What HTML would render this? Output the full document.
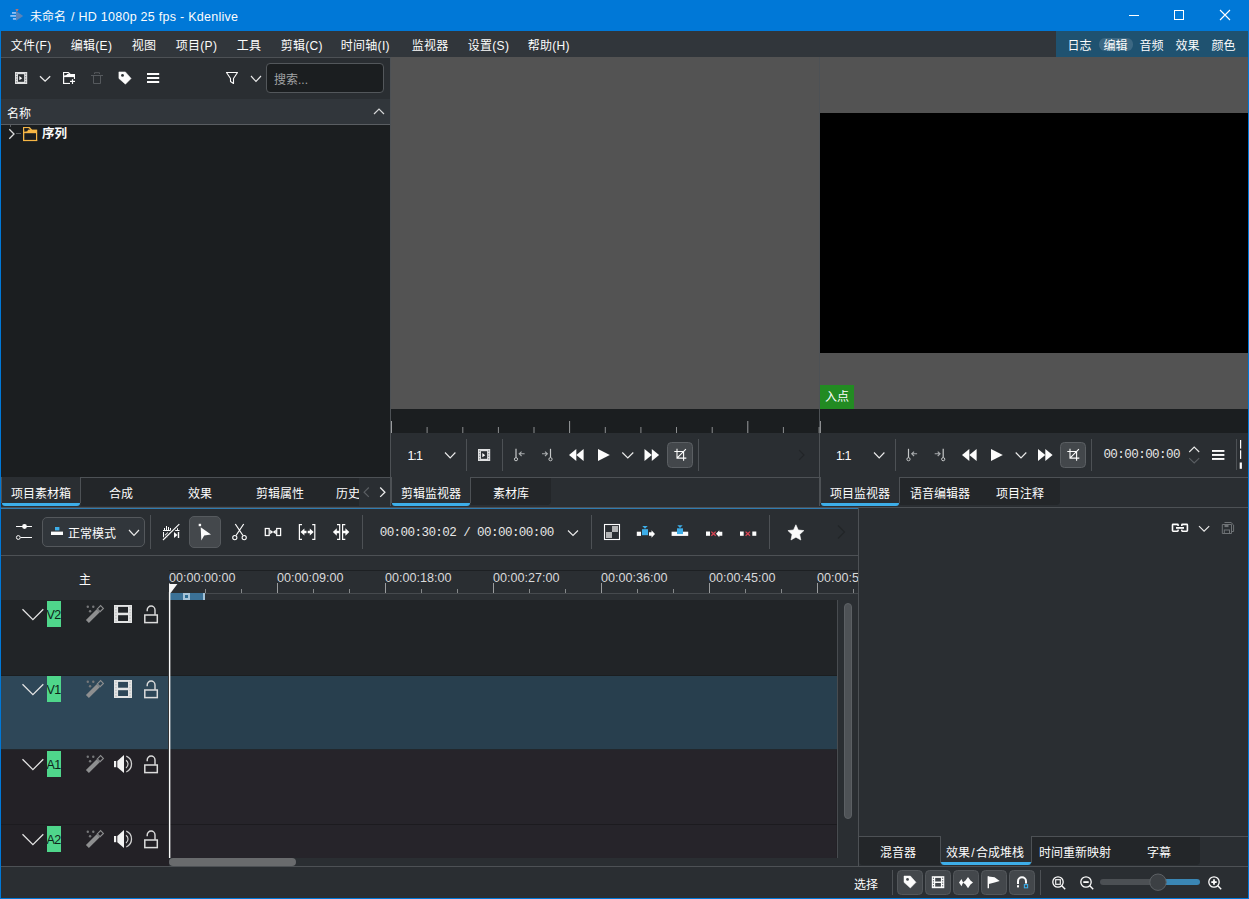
<!DOCTYPE html>
<html lang="zh-CN"><head><meta charset="utf-8"><title>Kdenlive</title>
<style>
*{box-sizing:border-box;margin:0;padding:0}
html,body{width:1249px;height:899px;overflow:hidden;background:#2a2e32}
body{position:relative;font-family:"Liberation Sans","Noto Sans CJK SC",sans-serif;font-size:12px;color:#fcfcfc}
.abs{position:absolute}
.t{position:absolute;white-space:nowrap;line-height:16px;font-size:12px}
.mono{font-family:"Liberation Mono",monospace}
svg{position:absolute;overflow:visible}
</style></head><body>
<div class="abs" style="left:0px;top:0px;width:1249px;height:31px;background:#0078d7;"></div>
<div class="abs" style="left:1px;top:31px;width:1247px;height:26px;background:#31363b;"></div>
<div class="abs" style="left:1px;top:57px;width:390px;height:1px;background:#4d5155;"></div>
<div class="abs" style="left:1056px;top:31px;width:193px;height:26px;background:#1f5270;"></div>
<div class="abs" style="left:1px;top:58px;width:389px;height:41px;background:#2a2e32;"></div>
<div class="abs" style="left:1px;top:99px;width:389px;height:25px;background:#31363b;"></div>
<div class="abs" style="left:1px;top:124px;width:389px;height:1px;background:#5a5e62;"></div>
<div class="abs" style="left:1px;top:125px;width:389px;height:352px;background:#1b1e20;"></div>
<div class="abs" style="left:390px;top:58px;width:1px;height:449px;background:#4d5155;"></div>
<div class="abs" style="left:1px;top:477px;width:389px;height:29px;background:#232629;"></div>
<div class="abs" style="left:1px;top:477px;width:80px;height:29px;background:#2a2e32;"></div>
<div class="abs" style="left:80px;top:477px;width:310px;height:1px;background:#4d5155;"></div>
<div class="abs" style="left:80px;top:477px;width:1px;height:26px;background:#4d5155;"></div>
<div class="abs" style="left:1px;top:477px;width:1px;height:26px;background:#4d5155;"></div>
<div class="abs" style="left:2px;top:503px;width:78px;height:3px;background:#3daee9;border-radius:0 0 3px 3px"></div>
<div class="abs" style="left:391px;top:57px;width:428px;height:352px;background:#535353;"></div>
<div class="abs" style="left:391px;top:409px;width:428px;height:24px;background:#1b1e20;"></div>
<div class="abs" style="left:391px;top:433px;width:428px;height:44px;background:#2a2e32;"></div>
<div class="abs" style="left:819px;top:57px;width:1px;height:450px;background:#4d5155;"></div>
<div class="abs" style="left:391px;top:477px;width:428px;height:29px;background:#2a2e32;"></div>
<div class="abs" style="left:471px;top:478px;width:80px;height:27px;background:#232629;border-radius:0 0 4px 0"></div>
<div class="abs" style="left:470px;top:477px;width:349px;height:1px;background:#4d5155;"></div>
<div class="abs" style="left:470px;top:477px;width:1px;height:26px;background:#4d5155;"></div>
<div class="abs" style="left:391px;top:477px;width:1px;height:26px;background:#4d5155;"></div>
<div class="abs" style="left:392px;top:503px;width:78px;height:3px;background:#3daee9;border-radius:0 0 3px 3px"></div>
<div class="abs" style="left:820px;top:57px;width:428px;height:352px;background:#535353;"></div>
<div class="abs" style="left:820px;top:113px;width:428px;height:240px;background:#000;"></div>
<div class="abs" style="left:820px;top:385px;width:34px;height:24px;background:#228b22;"></div>
<div class="abs" style="left:820px;top:409px;width:428px;height:24px;background:#1b1e20;"></div>
<div class="abs" style="left:820px;top:433px;width:428px;height:44px;background:#2a2e32;"></div>
<div class="abs" style="left:820px;top:477px;width:428px;height:29px;background:#2a2e32;"></div>
<div class="abs" style="left:900px;top:478px;width:160px;height:27px;background:#232629;border-radius:0 0 4px 0"></div>
<div class="abs" style="left:899px;top:477px;width:349px;height:1px;background:#4d5155;"></div>
<div class="abs" style="left:899px;top:477px;width:1px;height:26px;background:#4d5155;"></div>
<div class="abs" style="left:820px;top:477px;width:1px;height:26px;background:#4d5155;"></div>
<div class="abs" style="left:821px;top:503px;width:78px;height:3px;background:#3daee9;border-radius:0 0 3px 3px"></div>
<div class="abs" style="left:1px;top:506px;width:1247px;height:1px;background:#2a2e32;"></div>
<div class="abs" style="left:1px;top:507px;width:1247px;height:1px;background:#4d5155;"></div>
<div class="abs" style="left:1px;top:508px;width:858px;height:1px;background:#2f7bb0;"></div>
<div class="abs" style="left:1px;top:509px;width:857px;height:46px;background:#2a2e32;"></div>
<div class="abs" style="left:1px;top:555px;width:857px;height:1px;background:#4d5155;"></div>
<div class="abs" style="left:1px;top:556px;width:857px;height:310px;background:#2a2e32;"></div>
<div class="abs" style="left:858px;top:508px;width:1px;height:358px;background:#4d5155;"></div>
<div class="abs" style="left:859px;top:508px;width:389px;height:358px;background:#2a2e32;"></div>
<div class="abs" style="left:1px;top:866px;width:1247px;height:1px;background:#4d5155;"></div>
<div class="abs" style="left:1px;top:867px;width:1247px;height:31px;background:#2a2e32;"></div>
<div class="abs" style="left:0px;top:31px;width:1px;height:868px;background:#0078d7;"></div>
<div class="abs" style="left:1248px;top:31px;width:1px;height:868px;background:#0078d7;"></div>
<div class="abs" style="left:0px;top:898px;width:1249px;height:1px;background:#0078d7;"></div>
<div class="abs" style="left:169px;top:570px;width:689px;height:1px;background:#1d2023;"></div>
<div class="abs" style="left:169px;top:593px;width:689px;height:7px;background:#2c3034;"></div>
<div class="abs" style="left:169px;top:593px;width:689px;height:1px;background:#464a4e;"></div>
<div class="abs" style="left:1px;top:600px;width:836px;height:75px;background:#212427;"></div>
<div class="abs" style="left:1px;top:675px;width:837px;height:1px;background:#1b1e20;"></div>
<div class="abs" style="left:1px;top:676px;width:167px;height:73px;background:#2e4758;"></div>
<div class="abs" style="left:168px;top:676px;width:669px;height:73px;background:#283f4e;"></div>
<div class="abs" style="left:1px;top:749px;width:837px;height:1px;background:#22282d;"></div>
<div class="abs" style="left:1px;top:750px;width:836px;height:75px;background:#232126;"></div>
<div class="abs" style="left:168px;top:750px;width:668px;height:75px;background:#26242a;"></div>
<div class="abs" style="left:1px;top:825px;width:836px;height:33px;background:#232126;"></div>
<div class="abs" style="left:168px;top:825px;width:668px;height:33px;background:#26242a;"></div>
<div class="abs" style="left:1px;top:858px;width:168px;height:8px;background:#232126;"></div>
<div class="abs" style="left:1px;top:824px;width:836px;height:1px;background:#1c1b1f;"></div>
<div class="abs" style="left:168px;top:600px;width:1px;height:258px;background:#1b1e20;"></div>
<div class="abs" style="left:47px;top:601px;width:14px;height:26px;background:#4fd68b;"></div>
<div class="abs" style="left:47px;top:676px;width:14px;height:26px;background:#4fd68b;"></div>
<div class="abs" style="left:47px;top:751px;width:14px;height:26px;background:#4fd68b;"></div>
<div class="abs" style="left:47px;top:826px;width:14px;height:26px;background:#4fd68b;"></div>
<div class="abs" style="left:170px;top:593px;width:35px;height:7px;background:#3b7196;"></div>
<div class="abs" style="left:203px;top:593px;width:2px;height:7px;background:#a3c2d7;"></div>
<div class="abs" style="left:169px;top:858px;width:127px;height:8px;background:#696b6d;border-radius:4px"></div>
<div class="abs" style="left:844px;top:603px;width:8px;height:216px;background:#4e5256;border-radius:4px;border:1px solid #5c6064"></div>
<div class="abs" style="left:837px;top:600px;width:1px;height:258px;background:#484c50;"></div>
<div class="t " style="left:30px;top:8.5px;font-size:12.5px;letter-spacing:0.27px"><span style="font-size:12px;letter-spacing:0;margin-right:1.2px">未命名</span> / HD 1080p 25 fps - Kdenlive</div>
<div class="t " style="left:10.7px;top:38px;letter-spacing:0.3px">文件(F)</div>
<div class="t " style="left:70.7px;top:38px;letter-spacing:0.3px">编辑(E)</div>
<div class="t " style="left:131.7px;top:38px;letter-spacing:0.3px">视图</div>
<div class="t " style="left:175.7px;top:38px;letter-spacing:0.3px">项目(P)</div>
<div class="t " style="left:236.7px;top:38px;letter-spacing:0.3px">工具</div>
<div class="t " style="left:280.7px;top:38px;letter-spacing:0.3px">剪辑(C)</div>
<div class="t " style="left:340.7px;top:38px;letter-spacing:0.3px">时间轴(I)</div>
<div class="t " style="left:411.7px;top:38px;letter-spacing:0.3px">监视器</div>
<div class="t " style="left:467.7px;top:38px;letter-spacing:0.3px">设置(S)</div>
<div class="t " style="left:527.7px;top:38px;letter-spacing:0.3px">帮助(H)</div>
<div class="abs" style="left:1099px;top:38px;width:34px;height:13px;background:#3c6883;border-radius:6px"></div>
<div class="t " style="left:1067.4px;top:38px;">日志</div>
<div class="t " style="left:1103.4px;top:38px;">编辑</div>
<div class="t " style="left:1139.4px;top:38px;">音频</div>
<div class="t " style="left:1175.4px;top:38px;">效果</div>
<div class="t " style="left:1211.4px;top:38px;">颜色</div>
<div class="abs" style="left:266px;top:63px;width:118px;height:30px;background:#1b1e20;border:1px solid #53575b;border-radius:4px"></div>
<div class="t " style="left:274px;top:72px;color:#a1a3a5">搜索...</div>
<div class="t " style="left:7px;top:106px;">名称</div>
<div class="t " style="left:42px;top:126px;font-weight:bold;font-size:12.5px">序列</div>
<div class="t " style="left:11px;top:486px;">项目素材箱</div>
<div class="t " style="left:109px;top:486px;">合成</div>
<div class="t " style="left:188px;top:486px;">效果</div>
<div class="t " style="left:256px;top:486px;">剪辑属性</div>
<div class="t " style="left:336px;top:486px;">历史</div>
<div class="t " style="left:401px;top:486px;">剪辑监视器</div>
<div class="t " style="left:493px;top:486px;">素材库</div>
<div class="t " style="left:407.5px;top:448px;font-size:12.5px">1<span style="margin:0 -0.9px 0 -1.1px">:</span>1</div>
<div class="t " style="left:825px;top:389px;">入点</div>
<div class="t " style="left:836px;top:448px;font-size:12.5px">1<span style="margin:0 -0.9px 0 -1.1px">:</span>1</div>
<div class="t " style="left:830px;top:486px;">项目监视器</div>
<div class="t " style="left:910px;top:486px;">语音编辑器</div>
<div class="t " style="left:996px;top:486px;">项目注释</div>
<div class="t mono" style="left:1103.4px;top:447px;font-size:12.6px;letter-spacing:-0.6px;color:#e6e6e6">00:00:00:00</div>
<div class="abs" style="left:42px;top:517px;width:103px;height:30px;background:#31363b;border:1px solid #54585c;border-radius:5px"></div>
<div class="t " style="left:68px;top:526px;">正常模式</div>
<div class="t mono" style="left:379.7px;top:525px;font-size:12.6px;letter-spacing:-0.6px;color:#e6e6e6">00:00:30:02 / 00:00:00:00</div>
<div class="t " style="left:79px;top:572px;">主</div>
<div class="abs" style="left:169px;top:560px;width:689px;height:34px;overflow:hidden">
<div class="t " style="left:0px;top:10px;font-size:12.6px;color:#d9dadb">00:00:00:00</div>
<div class="t " style="left:108px;top:10px;font-size:12.6px;color:#d9dadb">00:00:09:00</div>
<div class="t " style="left:216px;top:10px;font-size:12.6px;color:#d9dadb">00:00:18:00</div>
<div class="t " style="left:324px;top:10px;font-size:12.6px;color:#d9dadb">00:00:27:00</div>
<div class="t " style="left:432px;top:10px;font-size:12.6px;color:#d9dadb">00:00:36:00</div>
<div class="t " style="left:540px;top:10px;font-size:12.6px;color:#d9dadb">00:00:45:00</div>
<div class="t " style="left:648px;top:10px;font-size:12.6px;color:#d9dadb">00:00:54:00</div>
</div>
<div class="abs" style="left:859px;top:837px;width:341px;height:28px;background:#232629;border-radius:0 0 4px 4px"></div>
<div class="abs" style="left:940px;top:836px;width:91px;height:30px;background:#2a2e32;"></div>
<div class="abs" style="left:859px;top:836px;width:81px;height:1px;background:#4d5155;"></div>
<div class="abs" style="left:1031px;top:836px;width:217px;height:1px;background:#4d5155;"></div>
<div class="abs" style="left:940px;top:836px;width:1px;height:27px;background:#4d5155;"></div>
<div class="abs" style="left:1031px;top:836px;width:1px;height:27px;background:#4d5155;"></div>
<div class="abs" style="left:941px;top:862px;width:90px;height:3px;background:#3daee9;border-radius:0 0 3px 3px"></div>
<div class="t " style="left:880px;top:845px;">混音器</div>
<div class="t " style="left:946px;top:845px;">效果<span style="margin:0 1.3px">/</span>合成堆栈</div>
<div class="t " style="left:1039px;top:845px;">时间重新映射</div>
<div class="t " style="left:1147px;top:845px;">字幕</div>
<div class="t " style="left:854px;top:877px;">选择</div>
<div class="abs" style="left:47px;top:601px;width:14px;height:26px;overflow:hidden"><div class="t" style="left:-0.6px;top:5.8px;font-size:12.5px;color:#0e241a;letter-spacing:-0.5px">V2</div></div>
<div class="abs" style="left:47px;top:676px;width:14px;height:26px;overflow:hidden"><div class="t" style="left:-0.6px;top:5.8px;font-size:12.5px;color:#0e241a;letter-spacing:-0.5px">V1</div></div>
<div class="abs" style="left:47px;top:751px;width:14px;height:26px;overflow:hidden"><div class="t" style="left:-0.6px;top:5.8px;font-size:12.5px;color:#0e241a;letter-spacing:-0.5px">A1</div></div>
<div class="abs" style="left:47px;top:826px;width:14px;height:26px;overflow:hidden"><div class="t" style="left:-0.6px;top:5.8px;font-size:12.5px;color:#0e241a;letter-spacing:-0.5px">A2</div></div>
<svg style="left:0;top:0" width="1249" height="899" viewBox="0 0 1249 899"><polygon points="16,11 23.2,15.9 16,20.8" fill="#5a83b8"/><rect x="12" y="12" width="4" height="1.8" fill="#8fbdf2"/><rect x="10.3" y="15" width="5.7" height="1.8" fill="#8fbdf2"/><rect x="12.9" y="18" width="3.1" height="1.8" fill="#8fbdf2"/><polygon points="15.4,9.2 18.6,9.2 17,11.6" fill="#f3724f"/><rect x="1129" y="15" width="10" height="1" fill="#fff"/><rect x="1174.5" y="10.5" width="9" height="9" fill="none" stroke="#fff" stroke-width="1"/><path d="M1220,10 L1230,20 M1230,10 L1220,20" stroke="#fff" stroke-width="1.1" fill="none"/><rect x="15" y="72" width="12.2" height="12" fill="#dfe0e1"/><rect x="18" y="74.2" width="6.1" height="7.6" fill="#2a2e32"/><rect x="16" y="73.4" width="1.2" height="1.3" fill="#8e9194"/><rect x="25" y="73.4" width="1.2" height="1.3" fill="#8e9194"/><rect x="16" y="76.0" width="1.2" height="1.3" fill="#8e9194"/><rect x="25" y="76.0" width="1.2" height="1.3" fill="#8e9194"/><rect x="16" y="78.60000000000001" width="1.2" height="1.3" fill="#8e9194"/><rect x="25" y="78.60000000000001" width="1.2" height="1.3" fill="#8e9194"/><rect x="16" y="81.2" width="1.2" height="1.3" fill="#8e9194"/><rect x="25" y="81.2" width="1.2" height="1.3" fill="#8e9194"/><polygon points="19.3,76.1 19.3,80.3 22.2,78.2" fill="#fcfcfc"/><polyline points="40,76.2 45.1,81.2 50.2,76.2" fill="none" stroke="#ebebeb" stroke-width="1.3"/><rect x="63" y="72" width="1.2" height="12" fill="#fcfcfc"/><rect x="63" y="72" width="5.6" height="1.2" fill="#fcfcfc"/><path d="M68.2,72.4 L70.4,74.6" stroke="#fcfcfc" stroke-width="1.3"/><rect x="64" y="74" width="11" height="3.1" fill="#fcfcfc"/><polygon points="64.2,73.2 67.8,73.2 66.4,75 64.2,75.6" fill="#2a2e32"/><rect x="73.9" y="77" width="1.1" height="2" fill="#fcfcfc"/><rect x="63" y="82.9" width="7" height="1.1" fill="#fcfcfc"/><rect x="70" y="80.8" width="5" height="1.2" fill="#fcfcfc"/><rect x="71.9" y="79.2" width="1.2" height="4.8" fill="#fcfcfc"/><path d="M91,75.5 H103 M94.5,74 V72.7 H99.5 V74 M93.5,76 V83.5 H100.5 V76" fill="none" stroke="#55595d" stroke-width="1"/><g transform="translate(118.9,71.9) scale(1.0)"><polygon points="0,0 6.5,0 12.2,6.5 6.5,12.3 0,6.5" fill="#fcfcfc" stroke="#fcfcfc" stroke-width="0.5" stroke-linejoin="round"/><circle cx="3.6" cy="3.5" r="1.4" fill="#2a2e32"/></g><rect x="147" y="73" width="12.2" height="2" fill="#fcfcfc"/><rect x="147" y="77" width="12.2" height="2" fill="#fcfcfc"/><rect x="147" y="81" width="12.2" height="2" fill="#fcfcfc"/><path d="M226.5,72.5 H237.5 L233.5,78.5 V83.5 L230.5,81.5 V78.5 Z" fill="none" stroke="#fcfcfc" stroke-width="1.1" stroke-linejoin="round"/><polyline points="251,76 256.0,81.5 261,76" fill="none" stroke="#ebebeb" stroke-width="1.15"/><polyline points="374,114 379,109 384,114" fill="none" stroke="#d5d6d7" stroke-width="1.2"/><polyline points="9.3,129.2 14,134 9.3,138.8" fill="none" stroke="#dcdcdc" stroke-width="1.3"/><path d="M16,133.5 H21" stroke="#5b5f63" stroke-width="1"/><path d="M10.5,125 V127" stroke="#5b5f63" stroke-width="1"/><rect x="23" y="127" width="1.3" height="14" fill="#f6b645"/><rect x="23" y="127" width="6.6" height="1.3" fill="#f6b645"/><path d="M29.2,127.5 L31.6,130.2" stroke="#f6b645" stroke-width="1.4"/><rect x="24" y="129.6" width="13.2" height="3.6" fill="#f6b645"/><polygon points="24.3,128.3 28.7,128.3 27.3,131.3 24.3,131.8" fill="#1b1e20"/><rect x="36" y="133" width="1.2" height="8" fill="#f6b645"/><rect x="23" y="139.9" width="14.2" height="1.2" fill="#f6b645"/><rect x="359" y="478" width="31" height="28" fill="#2a2e32"/><polyline points="368.8,487.5 364.1,492.2 368.8,496.9" fill="none" stroke="#5b5f63" stroke-width="1.2"/><polyline points="380.2,487.5 384.9,492.2 380.2,496.9" fill="none" stroke="#ececec" stroke-width="1.3"/><rect x="391.0" y="421" width="1" height="12" fill="#9a9c9e"/><rect x="426.6" y="427" width="1" height="6" fill="#8b8d8f"/><rect x="462.3" y="427" width="1" height="6" fill="#8b8d8f"/><rect x="497.9" y="427" width="1" height="6" fill="#8b8d8f"/><rect x="533.5" y="427" width="1" height="6" fill="#8b8d8f"/><rect x="569.1" y="421" width="1" height="12" fill="#9a9c9e"/><rect x="604.8" y="427" width="1" height="6" fill="#8b8d8f"/><rect x="640.4" y="427" width="1" height="6" fill="#8b8d8f"/><rect x="676.0" y="427" width="1" height="6" fill="#8b8d8f"/><rect x="711.7" y="427" width="1" height="6" fill="#8b8d8f"/><rect x="747.3" y="421" width="1" height="12" fill="#9a9c9e"/><rect x="782.9" y="427" width="1" height="6" fill="#8b8d8f"/><rect x="818.6" y="427" width="1" height="6" fill="#8b8d8f"/><rect x="820" y="421" width="1" height="12" fill="#8b8d8f"/><polyline points="445,452.5 450.2,458 455.4,452.5" fill="none" stroke="#ebebeb" stroke-width="1.15"/><rect x="466" y="439" width="1" height="32" fill="#4d5155"/><rect x="478" y="449" width="12.2" height="12" fill="#dfe0e1"/><rect x="481" y="451.2" width="6.1" height="7.6" fill="#2a2e32"/><rect x="479" y="450.4" width="1.2" height="1.3" fill="#8e9194"/><rect x="488" y="450.4" width="1.2" height="1.3" fill="#8e9194"/><rect x="479" y="453.0" width="1.2" height="1.3" fill="#8e9194"/><rect x="488" y="453.0" width="1.2" height="1.3" fill="#8e9194"/><rect x="479" y="455.59999999999997" width="1.2" height="1.3" fill="#8e9194"/><rect x="488" y="455.59999999999997" width="1.2" height="1.3" fill="#8e9194"/><rect x="479" y="458.2" width="1.2" height="1.3" fill="#8e9194"/><rect x="488" y="458.2" width="1.2" height="1.3" fill="#8e9194"/><polygon points="482.3,453.1 482.3,457.3 485.2,455.2" fill="#fcfcfc"/><rect x="502" y="439" width="1" height="32" fill="#4d5155"/><path d="M516,448.8 V457.6" stroke="#c6c8c9" stroke-width="1.2"/><circle cx="516" cy="459.2" r="1.6" fill="none" stroke="#c6c8c9" stroke-width="1"/><path d="M524.6,453.8 H519.2 M521.6,451.6 L519.2,453.8 L521.6,456" fill="none" stroke="#a9acae" stroke-width="1.1"/><path d="M550.5,448.8 V457.6" stroke="#c6c8c9" stroke-width="1.2"/><circle cx="550.5" cy="459.2" r="1.6" fill="none" stroke="#c6c8c9" stroke-width="1"/><path d="M542,453.8 H547.4 M545,451.6 L547.4,453.8 L545,456" fill="none" stroke="#a9acae" stroke-width="1.1"/><polygon points="576.3,449 576.3,461 569,455" fill="#fcfcfc"/><polygon points="583.6,449 583.6,461 576.3,455" fill="#fcfcfc"/><polygon points="598,449 598,461 609.8,455" fill="#fcfcfc"/><polyline points="622.3,452.5 627.8,458 633.3,452.5" fill="none" stroke="#ebebeb" stroke-width="1.15"/><polygon points="644.5,449 644.5,461 651.8,455" fill="#fcfcfc"/><polygon points="651.8,449 651.8,461 659.1,455" fill="#fcfcfc"/><rect x="667.5" y="442.5" width="25" height="25" rx="4" fill="#43474b" stroke="#5b5f63" stroke-width="1"/><path d="M677.0,448.8 V458.1 H686.3 M674.3,451.5 H683.5999999999999 V460.8 M677.0,458.1 L685.9,449.2" fill="none" stroke="#fcfcfc" stroke-width="1.1"/><rect x="698" y="439" width="1" height="32" fill="#4d5155"/><polyline points="799.2,450.2 804,455 799.2,459.8" fill="none" stroke="#222528" stroke-width="1.2"/><polyline points="874,452.5 879.2,458 884.4,452.5" fill="none" stroke="#ebebeb" stroke-width="1.15"/><rect x="895" y="439" width="1" height="32" fill="#4d5155"/><path d="M908.5,448.8 V457.6" stroke="#c6c8c9" stroke-width="1.2"/><circle cx="908.5" cy="459.2" r="1.6" fill="none" stroke="#c6c8c9" stroke-width="1"/><path d="M917.1,453.8 H911.7 M914.1,451.6 L911.7,453.8 L914.1,456" fill="none" stroke="#a9acae" stroke-width="1.1"/><path d="M943.2,448.8 V457.6" stroke="#c6c8c9" stroke-width="1.2"/><circle cx="943.2" cy="459.2" r="1.6" fill="none" stroke="#c6c8c9" stroke-width="1"/><path d="M934.7,453.8 H940.1 M937.7,451.6 L940.1,453.8 L937.7,456" fill="none" stroke="#a9acae" stroke-width="1.1"/><polygon points="969.3,449 969.3,461 962,455" fill="#fcfcfc"/><polygon points="976.6,449 976.6,461 969.3,455" fill="#fcfcfc"/><polygon points="991,449 991,461 1002.8,455" fill="#fcfcfc"/><polyline points="1015.7,452.5 1021.0,458 1026.3,452.5" fill="none" stroke="#ebebeb" stroke-width="1.15"/><polygon points="1038,449 1038,461 1045.3,455" fill="#fcfcfc"/><polygon points="1045.3,449 1045.3,461 1052.6,455" fill="#fcfcfc"/><rect x="1060.5" y="442.5" width="25" height="25" rx="4" fill="#43474b" stroke="#5b5f63" stroke-width="1"/><path d="M1070.0,448.8 V458.1 H1079.3 M1067.3,451.5 H1076.6 V460.8 M1070.0,458.1 L1078.8999999999999,449.2" fill="none" stroke="#fcfcfc" stroke-width="1.1"/><rect x="1091" y="439" width="1" height="32" fill="#4d5155"/><polyline points="1189.2,452 1194.2,447 1199.2,452" fill="none" stroke="#e8e8e8" stroke-width="1.1"/><polyline points="1189.2,458.2 1194.2,463 1199.2,458.2" fill="none" stroke="#5b5f63" stroke-width="1.1"/><rect x="1212" y="450" width="12.4" height="1.9" fill="#fcfcfc"/><rect x="1212" y="454" width="12.4" height="1.9" fill="#fcfcfc"/><rect x="1212" y="458" width="12.4" height="1.9" fill="#fcfcfc"/><rect x="1236" y="439" width="1" height="31" fill="#4d5155"/><rect x="1240" y="440" width="1.2" height="8.6" fill="#fcfcfc"/><rect x="1240" y="450.3" width="1.2" height="8.6" fill="#fcfcfc"/><rect x="1239.7" y="462.5" width="2.2" height="6.3" fill="#fcfcfc"/><path d="M16,526.5 H32 M20.5,537.5 H32" stroke="#fcfcfc" stroke-width="1"/><circle cx="24.5" cy="526.5" r="2.4" fill="#fcfcfc"/><circle cx="18.3" cy="537.5" r="1.9" fill="none" stroke="#fcfcfc" stroke-width="1"/><rect x="51" y="531.6" width="12" height="3.4" fill="#fcfcfc"/><rect x="55" y="527" width="4.4" height="3.4" fill="#3daee9"/><polyline points="129,530 134.0,535.4 139,530" fill="none" stroke="#ebebeb" stroke-width="1.15"/><rect x="150" y="515" width="1" height="34" fill="#4d5155"/><path d="M163,530.5 H179.5" stroke="#fcfcfc" stroke-width="1"/><rect x="164.0" y="528" width="1" height="2" fill="#fcfcfc"/><rect x="166.0" y="526" width="1" height="4" fill="#fcfcfc"/><rect x="168.0" y="527" width="1" height="3" fill="#fcfcfc"/><rect x="170.0" y="528" width="1" height="2" fill="#fcfcfc"/><rect x="173.0" y="528" width="1" height="2" fill="#fcfcfc"/><rect x="175.0" y="527" width="1" height="3" fill="#fcfcfc"/><rect x="177.0" y="526" width="1" height="4" fill="#fcfcfc"/><path d="M163.5,532 V538" stroke="#fcfcfc" stroke-width="1"/><polygon points="168,532 168,538 164.5,535" fill="#fcfcfc"/><path d="M178.5,532 V538" stroke="#fcfcfc" stroke-width="1.4"/><polygon points="174,532 174,538 177.5,535" fill="#fcfcfc"/><path d="M163.6,539.4 L178.7,524.8" stroke="#2a2e32" stroke-width="3.2"/><path d="M163,540 L179.3,524.2" stroke="#fcfcfc" stroke-width="1.1"/><rect x="189.5" y="516.5" width="31" height="31" rx="4.5" fill="#44484c" stroke="#565a5e" stroke-width="1"/><rect x="198.7" y="523.8" width="2.4" height="2.4" fill="#fcfcfc"/><polygon points="200.7,527.2 211,534.5 204.2,535.6 201.3,540.5" fill="#fcfcfc"/><path d="M235.3,524 L243,535.5 M243.7,524 L236,535.5" stroke="#fcfcfc" stroke-width="1.2" fill="none"/><circle cx="234.8" cy="537.6" r="2.1" fill="none" stroke="#fcfcfc" stroke-width="1.1"/><circle cx="244.2" cy="537.6" r="2.1" fill="none" stroke="#fcfcfc" stroke-width="1.1"/><rect x="265.3" y="528.5" width="3.9" height="7" fill="none" stroke="#fcfcfc" stroke-width="1.25"/><rect x="276.7" y="528.5" width="3.9" height="7" fill="none" stroke="#fcfcfc" stroke-width="1.25"/><polygon points="270.2,529.7 273.2,532 270.2,534.3" fill="#fcfcfc"/><polygon points="275.8,529.7 272.8,532 275.8,534.3" fill="#fcfcfc"/><path d="M302,524.6 H299.4 V539.4 H302 M312.2,524.6 H314.8 V539.4 H312.2" fill="none" stroke="#fcfcfc" stroke-width="1.2"/><polygon points="300.5,532 304.4,528.4 304.4,530.8 306.5,530.8 306.5,533.2 304.4,533.2 304.4,535.6" fill="#fcfcfc"/><polygon points="313.7,532 309.8,528.4 309.8,530.8 307.7,530.8 307.7,533.2 309.8,533.2 309.8,535.6" fill="#fcfcfc"/><path d="M337,524.6 H339.7 V539.4 H337 M345.3,524.6 H342.6 V539.4 H345.3" fill="none" stroke="#fcfcfc" stroke-width="1.2"/><polygon points="332.9,532 336.8,528.2 336.8,530.8 339.5,530.8 339.5,533.2 336.8,533.2 336.8,535.8" fill="#fcfcfc"/><polygon points="349.3,532 345.4,528.2 345.4,530.8 342.8,530.8 342.8,533.2 345.4,533.2 345.4,535.8" fill="#fcfcfc"/><rect x="362" y="515" width="1" height="34" fill="#4d5155"/><polyline points="568,530.5 573.0,535.5 578,530.5" fill="none" stroke="#ebebeb" stroke-width="1.15"/><rect x="591" y="515" width="1" height="34" fill="#4d5155"/><rect x="604.5" y="524.5" width="15" height="15" fill="none" stroke="#fcfcfc" stroke-width="1.1"/><rect x="612" y="526" width="6" height="6" fill="#b3b4b5"/><rect x="606" y="532" width="6" height="6" fill="#b3b4b5"/><rect x="636.8" y="531.7" width="4.2" height="4.2" fill="#fcfcfc"/><rect x="642" y="529.2" width="6" height="6" fill="#3daee9"/><polygon points="642.3,526 647.7,526 645,528.7" fill="#3daee9"/><polygon points="649,532.2 651.5,532.2 651.5,530.2 655,534 651.5,537.8 651.5,535.8 649,535.8" fill="#fcfcfc"/><rect x="671.6" y="531.7" width="16.6" height="4.2" fill="#fcfcfc"/><rect x="677" y="528.3" width="6" height="5.8" fill="#3daee9"/><polygon points="677.3,525.3 682.7,525.3 680,528" fill="#3daee9"/><rect x="706" y="531.5" width="4" height="4.3" fill="#fcfcfc"/><path d="M711.3,531.6 L715.7,535.8 M715.7,531.6 L711.3,535.8" stroke="#da4453" stroke-width="1.3"/><polygon points="716,533.7 719.3,530.2 719.3,531.7 722.3,531.7 722.3,535.7 719.3,535.7 719.3,537.2" fill="#fcfcfc"/><rect x="740" y="531.5" width="3.7" height="4.3" fill="#fcfcfc"/><path d="M745.6,531.6 L750,535.8 M750,531.6 L745.6,535.8" stroke="#da4453" stroke-width="1.3"/><rect x="752.3" y="531.5" width="4" height="4.3" fill="#fcfcfc"/><rect x="769" y="515" width="1" height="34" fill="#4d5155"/><polygon points="795.90,524.80 798.25,529.96 803.89,530.60 799.70,534.44 800.84,540.00 795.90,537.20 790.96,540.00 792.10,534.44 787.91,530.60 793.55,529.96" fill="#fcfcfc" stroke="#fcfcfc" stroke-width="0.6" stroke-linejoin="round"/><polyline points="838,525.5 844.5,532 838,538.5" fill="none" stroke="#222528" stroke-width="1.2"/><rect x="169.0" y="583" width="1" height="10" fill="#9a9c9e"/><rect x="205.0" y="589" width="1" height="4" fill="#85888a"/><rect x="241.0" y="589" width="1" height="4" fill="#85888a"/><rect x="277.0" y="583" width="1" height="10" fill="#9a9c9e"/><rect x="313.0" y="589" width="1" height="4" fill="#85888a"/><rect x="349.0" y="589" width="1" height="4" fill="#85888a"/><rect x="385.0" y="583" width="1" height="10" fill="#9a9c9e"/><rect x="421.0" y="589" width="1" height="4" fill="#85888a"/><rect x="457.0" y="589" width="1" height="4" fill="#85888a"/><rect x="493.0" y="583" width="1" height="10" fill="#9a9c9e"/><rect x="529.0" y="589" width="1" height="4" fill="#85888a"/><rect x="565.0" y="589" width="1" height="4" fill="#85888a"/><rect x="601.0" y="583" width="1" height="10" fill="#9a9c9e"/><rect x="637.0" y="589" width="1" height="4" fill="#85888a"/><rect x="673.0" y="589" width="1" height="4" fill="#85888a"/><rect x="709.0" y="583" width="1" height="10" fill="#9a9c9e"/><rect x="745.0" y="589" width="1" height="4" fill="#85888a"/><rect x="781.0" y="589" width="1" height="4" fill="#85888a"/><rect x="817.0" y="583" width="1" height="10" fill="#9a9c9e"/><rect x="853.0" y="589" width="1" height="4" fill="#85888a"/><polygon points="169,584 177.4,584 170.8,592.8 169,592.8" fill="#f6f6f6"/><rect x="168.9" y="592" width="1.45" height="266" fill="#f8f8f8"/><rect x="183" y="593" width="7" height="7" fill="#a6c3d7"/><rect x="185" y="595" width="3" height="3" fill="#2e6c93"/><polyline points="22.5,609.2 32.9,619.6 43.3,609.2" fill="none" stroke="#e4e4e4" stroke-width="1.3"/><path d="M87.4,621.6 L98.2,610.8000000000001" stroke="#8e8f90" stroke-width="4.2"/><path d="M97.3,608.9000000000001 L100.1,611.7 L103.4,608.4000000000001 L100.6,605.6 Z" fill="none" stroke="#8e8f90" stroke-width="1.1"/><circle cx="87.8" cy="606.8000000000001" r="1.2" fill="#77787a"/><circle cx="93.3" cy="606.8000000000001" r="1.2" fill="#77787a"/><circle cx="90.1" cy="611.2" r="1.2" fill="#77787a"/><g transform="translate(114,605) scale(1.0)"><rect x="0" y="0" width="18" height="18" fill="#e3e4e4"/><rect x="4.1" y="1.9" width="9.9" height="5.8" fill="#212427"/><rect x="4.1" y="10.2" width="9.9" height="5.8" fill="#212427"/><rect x="1.2" y="1.3" width="1.5" height="1.4" fill="#c4c5c5"/><rect x="15.3" y="1.3" width="1.5" height="1.4" fill="#c4c5c5"/><rect x="1.2" y="4.1" width="1.5" height="1.4" fill="#c4c5c5"/><rect x="15.3" y="4.1" width="1.5" height="1.4" fill="#c4c5c5"/><rect x="1.2" y="6.8999999999999995" width="1.5" height="1.4" fill="#c4c5c5"/><rect x="15.3" y="6.8999999999999995" width="1.5" height="1.4" fill="#c4c5c5"/><rect x="1.2" y="9.7" width="1.5" height="1.4" fill="#c4c5c5"/><rect x="15.3" y="9.7" width="1.5" height="1.4" fill="#c4c5c5"/><rect x="1.2" y="12.5" width="1.5" height="1.4" fill="#c4c5c5"/><rect x="15.3" y="12.5" width="1.5" height="1.4" fill="#c4c5c5"/><rect x="1.2" y="15.3" width="1.5" height="1.4" fill="#c4c5c5"/><rect x="15.3" y="15.3" width="1.5" height="1.4" fill="#c4c5c5"/></g><rect x="144.8" y="615.0" width="12.5" height="7.6" fill="none" stroke="#dcdcdc" stroke-width="1.5"/><path d="M147.2,611.3 V609.9 A3.9,3.9 0 0 1 155,609.9 V614.8" fill="none" stroke="#dcdcdc" stroke-width="1.4"/><polyline points="22.5,684.2 32.9,694.6 43.3,684.2" fill="none" stroke="#e4e4e4" stroke-width="1.3"/><path d="M87.4,696.6 L98.2,685.8000000000001" stroke="#8e8f90" stroke-width="4.2"/><path d="M97.3,683.9000000000001 L100.1,686.7 L103.4,683.4000000000001 L100.6,680.6 Z" fill="none" stroke="#8e8f90" stroke-width="1.1"/><circle cx="87.8" cy="681.8000000000001" r="1.2" fill="#77787a"/><circle cx="93.3" cy="681.8000000000001" r="1.2" fill="#77787a"/><circle cx="90.1" cy="686.2" r="1.2" fill="#77787a"/><g transform="translate(114,680) scale(1.0)"><rect x="0" y="0" width="18" height="18" fill="#e3e4e4"/><rect x="4.1" y="1.9" width="9.9" height="5.8" fill="#2e4758"/><rect x="4.1" y="10.2" width="9.9" height="5.8" fill="#2e4758"/><rect x="1.2" y="1.3" width="1.5" height="1.4" fill="#c4c5c5"/><rect x="15.3" y="1.3" width="1.5" height="1.4" fill="#c4c5c5"/><rect x="1.2" y="4.1" width="1.5" height="1.4" fill="#c4c5c5"/><rect x="15.3" y="4.1" width="1.5" height="1.4" fill="#c4c5c5"/><rect x="1.2" y="6.8999999999999995" width="1.5" height="1.4" fill="#c4c5c5"/><rect x="15.3" y="6.8999999999999995" width="1.5" height="1.4" fill="#c4c5c5"/><rect x="1.2" y="9.7" width="1.5" height="1.4" fill="#c4c5c5"/><rect x="15.3" y="9.7" width="1.5" height="1.4" fill="#c4c5c5"/><rect x="1.2" y="12.5" width="1.5" height="1.4" fill="#c4c5c5"/><rect x="15.3" y="12.5" width="1.5" height="1.4" fill="#c4c5c5"/><rect x="1.2" y="15.3" width="1.5" height="1.4" fill="#c4c5c5"/><rect x="15.3" y="15.3" width="1.5" height="1.4" fill="#c4c5c5"/></g><rect x="144.8" y="690.0" width="12.5" height="7.6" fill="none" stroke="#dcdcdc" stroke-width="1.5"/><path d="M147.2,686.3 V684.9 A3.9,3.9 0 0 1 155,684.9 V689.8" fill="none" stroke="#dcdcdc" stroke-width="1.4"/><polyline points="22.5,759.2 32.9,769.6 43.3,759.2" fill="none" stroke="#e4e4e4" stroke-width="1.3"/><path d="M87.4,771.6 L98.2,760.8000000000001" stroke="#8e8f90" stroke-width="4.2"/><path d="M97.3,758.9000000000001 L100.1,761.7 L103.4,758.4000000000001 L100.6,755.6 Z" fill="none" stroke="#8e8f90" stroke-width="1.1"/><circle cx="87.8" cy="756.8000000000001" r="1.2" fill="#77787a"/><circle cx="93.3" cy="756.8000000000001" r="1.2" fill="#77787a"/><circle cx="90.1" cy="761.2" r="1.2" fill="#77787a"/><rect x="114" y="761" width="2.2" height="6.2" fill="#f2f2f2"/><polygon points="117.3,761 124,755 124,773 117.3,767.2" fill="#f2f2f2"/><path d="M126,760.3 A4.6,4.6 0 0 1 126,767.9" fill="none" stroke="#d0d0d0" stroke-width="1.2"/><path d="M126.3,756.2 A8.6,8.6 0 0 1 126.3,772" fill="none" stroke="#d0d0d0" stroke-width="1.3"/><rect x="144.8" y="765.0" width="12.5" height="7.6" fill="none" stroke="#dcdcdc" stroke-width="1.5"/><path d="M147.2,761.3 V759.9 A3.9,3.9 0 0 1 155,759.9 V764.8" fill="none" stroke="#dcdcdc" stroke-width="1.4"/><polyline points="22.5,834.2 32.9,844.6 43.3,834.2" fill="none" stroke="#e4e4e4" stroke-width="1.3"/><path d="M87.4,846.6 L98.2,835.8000000000001" stroke="#8e8f90" stroke-width="4.2"/><path d="M97.3,833.9000000000001 L100.1,836.7 L103.4,833.4000000000001 L100.6,830.6 Z" fill="none" stroke="#8e8f90" stroke-width="1.1"/><circle cx="87.8" cy="831.8000000000001" r="1.2" fill="#77787a"/><circle cx="93.3" cy="831.8000000000001" r="1.2" fill="#77787a"/><circle cx="90.1" cy="836.2" r="1.2" fill="#77787a"/><rect x="114" y="836" width="2.2" height="6.2" fill="#f2f2f2"/><polygon points="117.3,836 124,830 124,848 117.3,842.2" fill="#f2f2f2"/><path d="M126,835.3 A4.6,4.6 0 0 1 126,842.9" fill="none" stroke="#d0d0d0" stroke-width="1.2"/><path d="M126.3,831.2 A8.6,8.6 0 0 1 126.3,847" fill="none" stroke="#d0d0d0" stroke-width="1.3"/><rect x="144.8" y="840.0" width="12.5" height="7.6" fill="none" stroke="#dcdcdc" stroke-width="1.5"/><path d="M147.2,836.3 V834.9 A3.9,3.9 0 0 1 155,834.9 V839.8" fill="none" stroke="#dcdcdc" stroke-width="1.4"/><rect x="1172.5" y="524.4" width="5.6" height="6.8" rx="0.6" fill="none" stroke="#fcfcfc" stroke-width="1.6"/><rect x="1181.8" y="524.4" width="5.6" height="6.8" rx="0.6" fill="none" stroke="#fcfcfc" stroke-width="1.6"/><rect x="1176.6" y="526" width="6.8" height="3.6" fill="#2a2e32"/><rect x="1176" y="527" width="8" height="1.8" fill="#fcfcfc"/><polyline points="1199,526.2 1204.1,531.2 1209.2,526.2" fill="none" stroke="#ebebeb" stroke-width="1.15"/><path d="M1222.3,524.5 V533.5 H1231.5 V524.5 Z M1224.5,522.5 H1231 L1233.6,525 V531.5 H1231.5" fill="none" stroke="#6f7376" stroke-width="1"/><rect x="1224.5" y="524.5" width="4" height="2.6" fill="#6f7376"/><rect x="1224.3" y="530" width="5.2" height="3.5" fill="none" stroke="#6f7376" stroke-width="1"/><rect x="892" y="870" width="1" height="25" fill="#4d5155"/><rect x="897.5" y="870.5" width="25" height="24" rx="4" fill="#43474b" stroke="#53575b" stroke-width="1"/><rect x="925.5" y="870.5" width="25" height="24" rx="4" fill="#43474b" stroke="#53575b" stroke-width="1"/><rect x="953.5" y="870.5" width="25" height="24" rx="4" fill="#43474b" stroke="#53575b" stroke-width="1"/><rect x="981.5" y="870.5" width="25" height="24" rx="4" fill="#43474b" stroke="#53575b" stroke-width="1"/><rect x="1009.5" y="870.5" width="25" height="24" rx="4" fill="#43474b" stroke="#53575b" stroke-width="1"/><g transform="translate(904,876) scale(0.98)"><polygon points="0,0 6.5,0 12.2,6.5 6.5,12.3 0,6.5" fill="#fcfcfc" stroke="#fcfcfc" stroke-width="0.5" stroke-linejoin="round"/><circle cx="3.6" cy="3.5" r="1.4" fill="#43474b"/></g><rect x="931.8" y="876.2" width="12.5" height="12" fill="#fcfcfc"/><rect x="935.2" y="877.9" width="5.7" height="3.6" fill="#43474b"/><rect x="935.2" y="883" width="5.7" height="3.6" fill="#43474b"/><rect x="932.9" y="877.6" width="1.1" height="1.3" fill="#6a6e72"/><rect x="942.1" y="877.6" width="1.1" height="1.3" fill="#6a6e72"/><rect x="932.9" y="880.1" width="1.1" height="1.3" fill="#6a6e72"/><rect x="942.1" y="880.1" width="1.1" height="1.3" fill="#6a6e72"/><rect x="932.9" y="882.6" width="1.1" height="1.3" fill="#6a6e72"/><rect x="942.1" y="882.6" width="1.1" height="1.3" fill="#6a6e72"/><rect x="932.9" y="885.1" width="1.1" height="1.3" fill="#6a6e72"/><rect x="942.1" y="885.1" width="1.1" height="1.3" fill="#6a6e72"/><polygon points="959,882.6 960.5,880.5 961.5,879 962.3,881 963.3,882.6 962.3,884.2 961.5,886.2 960.5,884.7" fill="#fcfcfc"/><polygon points="963,882.6 965.5,880.6 968,877 970.5,880.6 973,882.6 970.5,884.6 968,888.2 965.5,884.6" fill="#fcfcfc"/><path d="M988.3,876.2 V888.2" stroke="#fcfcfc" stroke-width="1.4"/><polygon points="988.6,876.5 994.6,877.3 999.7,881 994.6,882.4 988.8,884.1" fill="#fcfcfc"/><path d="M1018,884 V881.3 A4,4 0 0 1 1026,881.3 V883.5" fill="none" stroke="#fcfcfc" stroke-width="2"/><rect x="1017" y="885.2" width="2" height="2.2" fill="#fcfcfc"/><rect x="1024.4" y="884.6" width="3.2" height="3.2" fill="none" stroke="#3daee9" stroke-width="1.1"/><rect x="1040" y="870" width="1" height="25" fill="#4d5155"/><circle cx="1058" cy="882" r="5.2" fill="none" stroke="#fcfcfc" stroke-width="1.3"/><path d="M1061.8,885.8 L1065.2,889.2" stroke="#fcfcfc" stroke-width="1.4"/><rect x="1055.7" y="879.7" width="4.6" height="4.6" fill="none" stroke="#fcfcfc" stroke-width="1.1"/><circle cx="1086" cy="882" r="5.2" fill="none" stroke="#fcfcfc" stroke-width="1.3"/><path d="M1089.8,885.8 L1093.2,889.2" stroke="#fcfcfc" stroke-width="1.4"/><rect x="1083.3" y="881.2" width="5.4" height="1.8" fill="#fcfcfc"/><circle cx="1214" cy="882" r="5.2" fill="none" stroke="#fcfcfc" stroke-width="1.3"/><path d="M1217.8,885.8 L1221.2,889.2" stroke="#fcfcfc" stroke-width="1.4"/><rect x="1211.3" y="881.2" width="5.4" height="1.8" fill="#fcfcfc"/><rect x="1213.1" y="879.3" width="1.8" height="5.4" fill="#fcfcfc"/><rect x="1100" y="879" width="60" height="6" rx="3" fill="#4c5054"/><rect x="1155" y="879" width="45" height="6" rx="3" fill="#3a86b4"/><circle cx="1158" cy="882.2" r="8.2" fill="#3c4044" stroke="#5d6165" stroke-width="1"/></svg>
</body></html>
